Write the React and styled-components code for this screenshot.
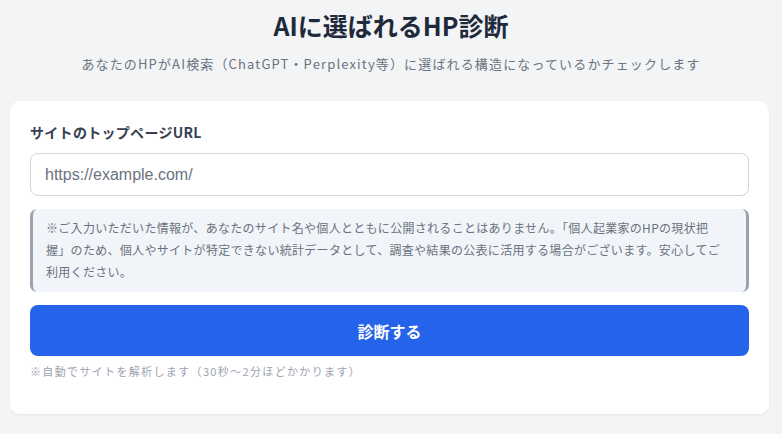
import React, { useState } from 'react'
import styled, { createGlobalStyle } from 'styled-components'

const GlobalStyle = createGlobalStyle`
  * {
    box-sizing: border-box;
  }
  body {
    margin: 0;
    background: #f3f4f6;
    font-family: 'Noto Sans CJK JP', 'Noto Sans', sans-serif;
    color: #1f2937;
  }
`

export default function App() {
  const [url, setUrl] = useState('')

  return (
    <>
      <GlobalStyle />
      <Page>
        <Title>AIに選ばれるHP診断</Title>
        <Lead>
          あなたのHPがAI検索（ChatGPT・Perplexity等）に選ばれる構造になっているかチェックします
        </Lead>
        <Card>
          <Label htmlFor="site-url">サイトのトップページURL</Label>
          <UrlInput
            id="site-url"
            type="url"
            placeholder="https://example.com/"
            value={url}
            onChange={(e) => setUrl(e.target.value)}
          />
          <Notice>
            ※ご入力いただいた情報が、あなたのサイト名や個人とともに公開されることはありません。「個人起業家のHPの現状把握」のため、個人やサイトが特定できない統計データとして、調査や結果の公表に活用する場合がございます。安心してご利用ください。
          </Notice>
          <SubmitButton type="button">診断する</SubmitButton>
          <Hint>※自動でサイトを解析します（30秒〜2分ほどかかります）</Hint>
        </Card>
      </Page>
    </>
  )
}

const Page = styled.main`
  display: flex;
  flex-direction: column;
  align-items: center;
  padding: 8px 10px 20px;
`

const Title = styled.h1`
  margin: 0;
  font-size: 25px;
  line-height: 34px;
  font-weight: 700;
  color: #1e293b;
`

const Lead = styled.p`
  margin: 12px 0 0;
  font-size: 13px;
  line-height: 20px;
  letter-spacing: 1.15px;
  color: #6b7280;
`

const Card = styled.section`
  align-self: stretch;
  display: flex;
  flex-direction: column;
  margin-top: 27px;
  margin-right: 3px;
  padding: 21px 20px 35px;
  background: #ffffff;
  border-radius: 10px;
  box-shadow: 0 1px 3px rgba(15, 23, 42, 0.05);
`

const Label = styled.label`
  font-size: 14px;
  line-height: 20px;
  font-weight: 700;
  color: #374151;
  letter-spacing: 0.3px;
`

const UrlInput = styled.input`
  margin-top: 11px;
  height: 43px;
  padding: 0 14px;
  border: 1px solid #d1d5db;
  border-radius: 8px;
  font-family: 'Liberation Sans', Arial, sans-serif;
  font-size: 16px;
  color: #111827;
  background: #ffffff;
  outline: none;

  &::placeholder {
    color: #6b7280;
  }

  &:focus {
    border-color: #2563eb;
  }
`

const Notice = styled.p`
  margin: 13px 0 0;
  padding: 8px 20px 9px 13px;
  background: #f1f4f8;
  border-left: 3px solid #9ca3af;
  border-right: 3px solid #94a3b8;
  border-radius: 7px;
  font-size: 12px;
  line-height: 22px;
  letter-spacing: 0.3px;
  color: #6b7280;
`

const SubmitButton = styled.button`
  margin-top: 13px;
  height: 51px;
  border: none;
  border-radius: 8px;
  background: #2563eb;
  color: #ffffff;
  font-family: inherit;
  font-size: 16px;
  font-weight: 700;
  cursor: pointer;

  &:hover {
    background: #1d4ed8;
  }
`

const Hint = styled.p`
  margin: 7px 0 0;
  font-size: 11px;
  line-height: 16px;
  letter-spacing: 1.35px;
  color: #9ca3af;
`
